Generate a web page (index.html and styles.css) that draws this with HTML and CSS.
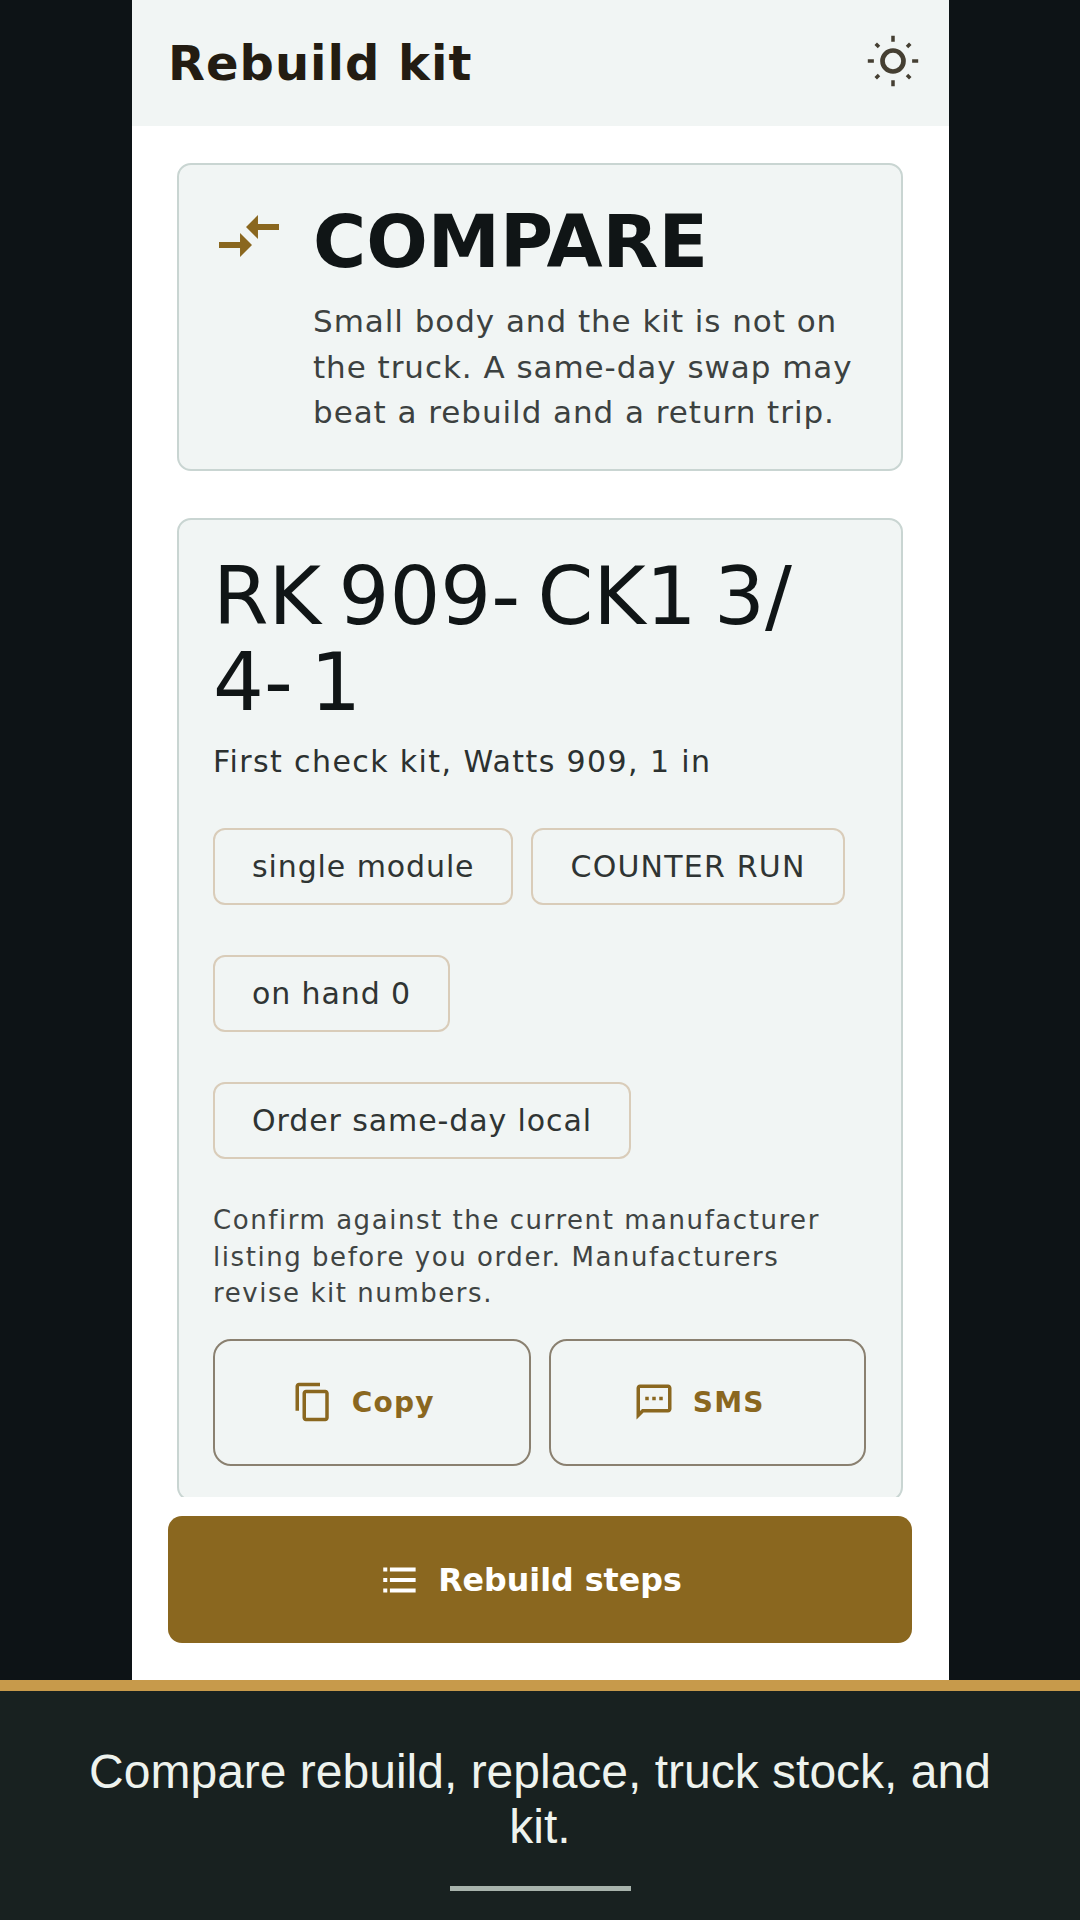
FILE: index.html
```html
<!DOCTYPE html>
<html lang="en">
<head>
<meta charset="utf-8">
<title>Rebuild kit</title>
<link rel="stylesheet" href="styles.css">
</head>
<body>
<div class="screen">
  <div class="stage">
    <main class="phone">
      <header class="topbar">
        <h1 class="topbar-title">Rebuild kit</h1>
        <svg class="icon-sun" viewBox="0 0 24 24"><circle cx="12" cy="12" r="4.5"/><path d="M12 1.2v2.6M12 20.2v2.6M1.2 12h2.6M20.2 12h2.6M4.6 4.6l1.4 1.4M18 18l1.4 1.4M19.4 4.6L18 6M6 18l-1.4 1.4"/></svg>
      </header>
      <div class="scroll">
        <section class="card verdict">
          <svg class="icon-compare" viewBox="0 0 24 24"><path d="M9.01 14H2v2h7.01v3L13 15l-3.99-4v3zm5.98-1v-3H22V8h-7.01V5L11 9l3.99 4z"/></svg>
          <div class="verdict-body">
            <h2 class="verdict-title">COMPARE</h2>
            <p class="verdict-text">Small body and the kit is not on the truck. A same-day swap may beat a rebuild and a return trip.</p>
          </div>
        </section>
        <section class="card kit">
          <h2 class="kit-number">RK 909- CK1 3/ 4- 1</h2>
          <p class="kit-name">First check kit, Watts 909, 1 in</p>
          <div class="pills">
            <span class="pill">single module</span>
            <span class="pill pill-caps">COUNTER RUN</span>
            <span class="pill">on hand 0</span>
            <span class="pill">Order same-day local</span>
          </div>
          <p class="kit-note">Confirm against the current manufacturer listing before you order. Manufacturers revise kit numbers.</p>
          <div class="actions">
            <button class="action">
              <svg class="icon-action" viewBox="0 0 24 24"><path d="M16 1H4c-1.1 0-2 .9-2 2v14h2V3h12V1zm3 4H8c-1.1 0-2 .9-2 2v14c0 1.1.9 2 2 2h11c1.1 0 2-.9 2-2V7c0-1.1-.9-2-2-2zm0 16H8V7h11v14z"/></svg>
              <span>Copy</span>
            </button>
            <button class="action">
              <svg class="icon-action" viewBox="0 0 24 24"><path d="M20 2H4c-1.1 0-1.99.9-1.99 2L2 22l4-4h14c1.1 0 2-.9 2-2V4c0-1.1-.9-2-2-2zm0 14H5.17L4 17.17V4h16v12zM7 9h2v2H7zm4 0h2v2h-2zm4 0h2v2h-2z"/></svg>
              <span>SMS</span>
            </button>
          </div>
        </section>
      </div>
      <div class="footer">
        <button class="primary">
          <svg class="icon-list" viewBox="0 0 24 24"><path d="M3 4.8h2.3v2.4H3zM6.8 4.8h14.7v2.4H6.8zM3 10.8h2.3v2.4H3zM6.8 10.8h14.7v2.4H6.8zM3 16.8h2.3v2.4H3zM6.8 16.8h14.7v2.4H6.8z"/></svg>
          <span>Rebuild steps</span>
        </button>
      </div>
    </main>
  </div>
  <footer class="caption">
    <p class="caption-text">Compare rebuild, replace, truck stock, and kit.</p>
    <div class="caption-handle"></div>
  </footer>
</div>
</body>
</html>
```
FILE: styles.css
```css
* { box-sizing: border-box; }
html, body { margin: 0; padding: 0; }
body { background: #0d1316; font-family: "DejaVu Sans", sans-serif; }
h1, h2, p { margin: 0; }

.screen { width: 1080px; height: 1920px; display: flex; flex-direction: column; overflow: hidden; }
.stage { height: 1680px; display: flex; justify-content: flex-start; padding-left: 132px; background: #0d1316; }
.phone { width: 817px; height: 100%; background: #fff; display: flex; flex-direction: column; }

.topbar { height: 126px; flex: none; background: #f1f5f4; display: flex; align-items: center; justify-content: space-between; padding: 2px 28px 0 36px; }
.topbar-title { font-size: 48px; font-weight: 700; letter-spacing: 1px; color: #231c12; line-height: 1.2; }
.icon-sun { width: 56px; height: 56px; margin-bottom: 6px; fill: none; stroke: #453f32; }
.icon-sun circle { stroke-width: 2; }
.icon-sun path { stroke-width: 1.5; }

.scroll { height: 1371px; flex: none; overflow: hidden; padding: 37px 46px 0 45px; display: flex; flex-direction: column; gap: 47px; }
.card { flex: none; background: #f1f5f4; border: 2px solid #c9d5d2; border-radius: 14px; }

.verdict { height: 308px; display: flex; gap: 28px; padding: 35px 34px 0; }
.icon-compare { width: 72px; height: 72px; flex: none; fill: #8a671f; }
.verdict-body { padding-top: 2px; }
.verdict-title { font-size: 72.5px; font-weight: 700; line-height: 80px; color: #101516; }
.verdict-text { font-size: 31px; line-height: 45.5px; letter-spacing: .95px; color: #3c4140; margin-top: 17px; }

.kit { padding: 34px 35px 33px 34px; }
.kit-number { font-size: 80px; font-weight: 400; line-height: 86px; color: #101516; word-spacing: -8px; }
.kit-name { font-size: 30px; line-height: 44px; letter-spacing: 1.4px; color: #2c3130; margin-top: 14px; }
.pills { display: flex; flex-wrap: wrap; gap: 50px 18px; margin-top: 44px; }
.pill { height: 77px; display: flex; align-items: center; padding: 0 37px; border: 2px solid #d9ccb9; border-radius: 12px; font-size: 30px; letter-spacing: .9px; color: #2f3433; }
.pill-caps { letter-spacing: 1.2px; }
.kit-note { font-size: 26px; line-height: 36.5px; letter-spacing: 1.55px; color: #3f4443; margin-top: 43px; }
.actions { display: grid; grid-template-columns: 1fr 1fr; gap: 18px; margin-top: 27px; }
.action { height: 127px; background: transparent; border: 2px solid #8a8070; border-radius: 18px; padding: 0 17px 0 0; display: flex; align-items: center; justify-content: center; gap: 18px; font: 700 28px "DejaVu Sans", sans-serif; letter-spacing: 1.2px; color: #8a671f; }
.icon-action { width: 42px; height: 42px; fill: #8a671f; }

.footer { flex: 1; padding: 19px 37px 37px 36px; }
.primary { width: 100%; height: 127px; background: #8a671f; border: 0; border-radius: 14px; padding: 0 20px 0 0; display: flex; align-items: center; justify-content: center; gap: 18px; font: 700 31.7px "DejaVu Sans", sans-serif; color: #fff; }
.icon-list { width: 42px; height: 42px; fill: #fff; }

.caption { height: 240px; flex: none; background: #182120; border-top: 11px solid #c79a4b; display: flex; flex-direction: column; align-items: center; padding: 53px 60px 0; }
.caption-text { font-family: "Liberation Sans", sans-serif; font-size: 48px; line-height: 55px; color: #eef3ee; text-align: center; }
.caption-handle { width: 181px; height: 5px; background: #a7b3ac; margin-top: 32px; }
```
